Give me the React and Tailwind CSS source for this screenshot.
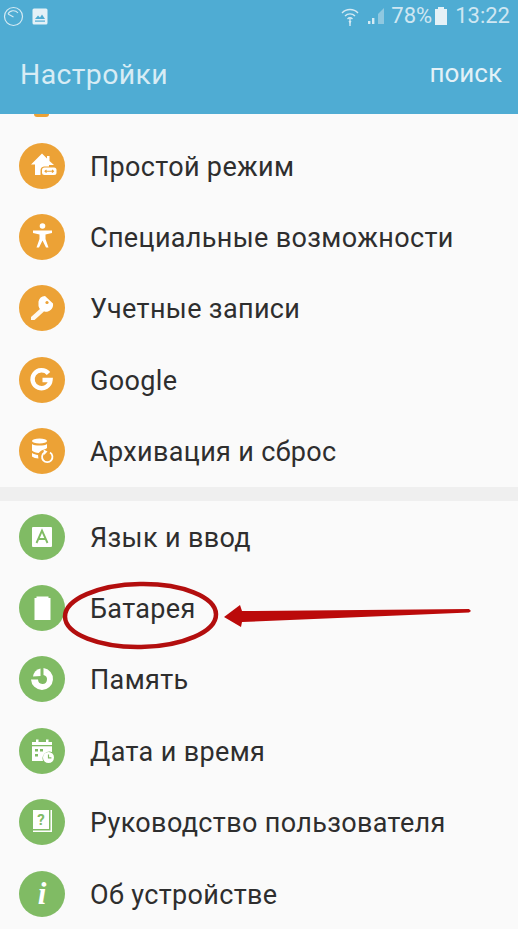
import React from 'react';

const ORANGE = 'bg-[#eca236]';
const GREEN = 'bg-[#80bb64]';

const HomeIcon = () => (
  <svg viewBox="0 0 46 46" className="w-[46px] h-[46px]">
    <path d="M12 21.5 L23 10.5 L28 15.5 V13 H30.5 V18 L35 22 H30 V23.5 H25 A4 4 0 0 0 21.5 27.5 V32 H16 V21.5 Z" fill="#fff" />
    <rect x="23" y="24.5" width="14.5" height="7.5" rx="2.5" fill="#fff" />
    <path d="M26 28.2 H34.5 M27.5 26.8 L26 28.2 L27.5 29.6 M33 26.8 L34.5 28.2 L33 29.6" stroke="#eca236" strokeWidth="1.1" fill="none" />
  </svg>
);

const PersonIcon = () => (
  <svg viewBox="0 0 46 46" className="w-[46px] h-[46px]">
    <circle cx="23.5" cy="12" r="2.8" fill="#fff" />
    <path d="M14 16.5 H33 V19 L26.5 20.5 V25 L29.5 33.5 H27 L23.5 26.5 L20 33.5 H17.5 L20.5 25 V20.5 L14 19 Z" fill="#fff" />
  </svg>
);

const KeyIcon = () => (
  <svg viewBox="0 0 46 46" className="w-[46px] h-[46px]">
    <path d="M19.5 16.5 A7 7 0 0 1 26 11 L34 18.5 A7 7 0 0 1 25.5 26.5 A7 7 0 0 1 19.5 21 Z" fill="#fff" />
    <path d="M21.5 23.5 L12 32 V35 H15.5 L25 26.5 Z" fill="#fff" opacity="0.92" />
    <circle cx="28" cy="17.5" r="1.6" fill="#eca236" />
  </svg>
);

const GoogleIcon = () => (
  <svg viewBox="0 0 46 46" className="w-[46px] h-[46px]">
    <path d="M29.5 16.5 A9 9 0 1 0 31.5 23 H23.5" stroke="#fff" strokeWidth="4.4" fill="none" />
  </svg>
);

const BackupIcon = () => (
  <svg viewBox="0 0 46 46" className="w-[46px] h-[46px]">
    <ellipse cx="20.5" cy="13" rx="7.5" ry="2.6" fill="#fff" />
    <path d="M13 16 C15 18 26 18 28 16 V20 C26 21.5 24 22 22.5 22.4 C21 23.5 20 24.5 19.6 25 C17 24.8 14.5 24 13 22.5 Z" fill="#fff" />
    <path d="M13 25 C14.5 26 17 26.8 19 27 L19.4 30.5 C17 30.4 14.5 29.8 13 28.5 Z" fill="#fff" />
    <path d="M25.5 24.5 A5.2 5.2 0 1 0 31 24.5" stroke="#fff" strokeWidth="1.8" fill="none" />
    <path d="M24.5 21.5 L28.5 23.5 L25.2 27 Z" fill="#fff" />
  </svg>
);

const LangIcon = () => (
  <svg viewBox="0 0 46 46" className="w-[46px] h-[46px]">
    <rect x="13" y="13" width="20" height="20" rx="1" fill="#fff" />
    <path d="M17.5 29 L23 16.5 L28.5 29 M19.5 25 H26.5" stroke="#80bb64" strokeWidth="1.9" fill="none" />
  </svg>
);

const BatteryIcon = () => (
  <svg viewBox="0 0 46 46" className="w-[46px] h-[46px]">
    <path d="M15.5 13 H17.5 V11.5 H29.5 V13 H31.5 V35 H15.5 Z" fill="#fff" />
  </svg>
);

const MemoryIcon = () => (
  <svg viewBox="0 0 46 46" className="w-[46px] h-[46px]">
    <path d="M24.5 12 A11 11 0 1 1 12 23.5 H19 A4.5 4.5 0 1 0 24.5 19 Z" fill="#fff" />
    <path d="M21.5 12.5 V20 L14 20.5 A10 10 0 0 1 21.5 12.5 Z" fill="#fff" />
  </svg>
);

const DateIcon = () => (
  <svg viewBox="0 0 46 46" className="w-[46px] h-[46px]">
    <path d="M13 14 H17 V11.5 H19.5 V14 H27 V11.5 H29.5 V14 H33 V24 A7 7 0 0 0 24 33 H13 Z" fill="#fff" />
    <rect x="13" y="17" width="20" height="1.3" fill="#80bb64" />
    <path d="M16 21 H19 V23.5 H16 Z M21 21 H24 V23.5 H21 Z M16 26 H19 V28.5 H16 Z" fill="#80bb64" />
    <circle cx="29.5" cy="29.5" r="5.5" fill="#fff" />
    <path d="M29.5 26.5 V29.8 H32.4" stroke="#80bb64" strokeWidth="1.2" fill="none" />
  </svg>
);

const GuideIcon = () => (
  <svg viewBox="0 0 46 46" className="w-[46px] h-[46px]">
    <rect x="14" y="11" width="16" height="19" fill="#fff" />
    <path d="M31.5 11 V31.5 H14 V33 H33 V11 Z" fill="#fff" />
    <text x="22" y="26" textAnchor="middle" fontSize="15" fontWeight="700" fill="#80bb64" fontFamily="Roboto, sans-serif">?</text>
  </svg>
);

const InfoIcon = () => (
  <span className="font-['Liberation_Serif',serif] italic font-bold text-[31px] leading-none text-white">i</span>
);

const section1 = [
  { label: 'Простой режим', icon: HomeIcon },
  { label: 'Специальные возможности', icon: PersonIcon },
  { label: 'Учетные записи', icon: KeyIcon },
  { label: 'Google', icon: GoogleIcon },
  { label: 'Архивация и сброс', icon: BackupIcon },
];

const section2 = [
  { label: 'Язык и ввод', icon: LangIcon },
  { label: 'Батарея', icon: BatteryIcon },
  { label: 'Память', icon: MemoryIcon },
  { label: 'Дата и время', icon: DateIcon },
  { label: 'Руководство пользователя', icon: GuideIcon },
  { label: 'Об устройстве', icon: InfoIcon },
];

const Row = ({ label, icon: Icon, color }) => (
  <div className="h-[71.4px] flex items-center pl-[19px]">
    <div className={`w-[46px] h-[46px] rounded-full flex items-center justify-center shrink-0 ${color}`}>
      <Icon />
    </div>
    <span className="ml-[25px] pt-[2px] text-[27px] leading-[36px] text-[#2e2e2e] tracking-[0.35px]">{label}</span>
  </div>
);

const StatusBar = () => (
  <div className="h-[32px] flex items-center justify-between pl-[3px] pr-[8px] text-[#cfe7f2]">
    <div className="flex items-center gap-[8px]">
      <svg viewBox="0 0 21 21" className="w-[21px] h-[21px]">
        <circle cx="10.5" cy="10.5" r="9" stroke="#d5eaf3" strokeWidth="1.2" fill="none" />
        <path d="M5 8 A6 6 0 0 1 15 7 M5 8 L10.5 11" stroke="#d5eaf3" strokeWidth="1.1" fill="none" />
      </svg>
      <svg viewBox="0 0 16 17" className="w-[16px] h-[17px]">
        <rect x="0.5" y="0.5" width="15" height="16" rx="1.5" fill="#e4f1f7" />
        <path d="M3 11 L6 7.5 L8 9.5 L10 6.5 L13 11 Z" fill="#4facd3" />
        <rect x="3" y="12.5" width="10" height="1.2" fill="#4facd3" />
      </svg>
    </div>
    <div className="flex items-center">
      <svg viewBox="0 0 20 20" className="w-[20px] h-[20px]">
        <path d="M2 7 A11 11 0 0 1 18 7 M5 10 A7 7 0 0 1 15 10 M7.5 13 A3.6 3.6 0 0 1 12.5 13" stroke="#d5eaf3" strokeWidth="1.4" fill="none" />
        <path d="M8.5 15 H11.5 L10 18 Z" fill="#d5eaf3" />
        <path d="M9 12 H11 V20 H9 Z" fill="#d5eaf3" opacity="0.7" />
      </svg>
      <svg viewBox="0 0 18 18" className="w-[18px] h-[18px] ml-[7px]">
        <path d="M17 1 V17 H11 V7 Z" fill="#8fc8e0" />
        <rect x="1" y="14" width="2.4" height="3" fill="#d5eaf3" />
        <rect x="5" y="11" width="2.4" height="6" fill="#d5eaf3" />
      </svg>
      <span className="ml-[6px] text-[22px] leading-none">78%</span>
      <svg viewBox="0 0 12 18" className="w-[12px] h-[18px] ml-[3px]">
        <path d="M0 2 H3 V0 H9 V2 H12 V18 H0 Z" fill="#e4f1f7" />
      </svg>
      <span className="ml-[8px] text-[22px] leading-none">13:22</span>
    </div>
  </div>
);

// red circle + arrow drawn on top of the screenshot
const Annotation = () => (
  <svg viewBox="0 0 518 929" className="absolute inset-0 w-[518px] h-[929px] pointer-events-none">
    <ellipse cx="140.5" cy="615.5" rx="75.5" ry="31.5" stroke="#b30e0e" strokeWidth="4.5" fill="none" transform="rotate(-1 140.5 615.5)" />
    <path d="M224 617 L240 605 L242 611 L469 609 L471 611 L469 612.5 L242 622 L241 627 Z" fill="#bb0a0a" />
  </svg>
);

export default function App() {
  return (
    <div className="relative w-[518px] h-[929px] overflow-hidden bg-[#fafafa] font-['Roboto',sans-serif]">
      <header className="h-[114px] bg-[#4facd3] flex flex-col">
        <StatusBar />
        <div className="flex-1 flex items-center justify-between pl-[20px] pr-[16px] pt-[4px]">
          <span className="text-[28.4px] text-[#d8ecf5] tracking-[0.4px]">Настройки</span>
          <span className="text-[26px] text-[#e4f1f7] -translate-y-[2px]">поиск</span>
        </div>
      </header>
      <div className="h-[16px] overflow-hidden">
        <div className="w-[15px] h-[3px] ml-[34px] rounded-b-full bg-[#eca236]" />
      </div>
      {section1.map(item => <Row key={item.label} {...item} color={ORANGE} />)}
      <div className="h-[14px] bg-[#efefef]" />
      {section2.map(item => <Row key={item.label} {...item} color={GREEN} />)}
      <Annotation />
    </div>
  );
}
